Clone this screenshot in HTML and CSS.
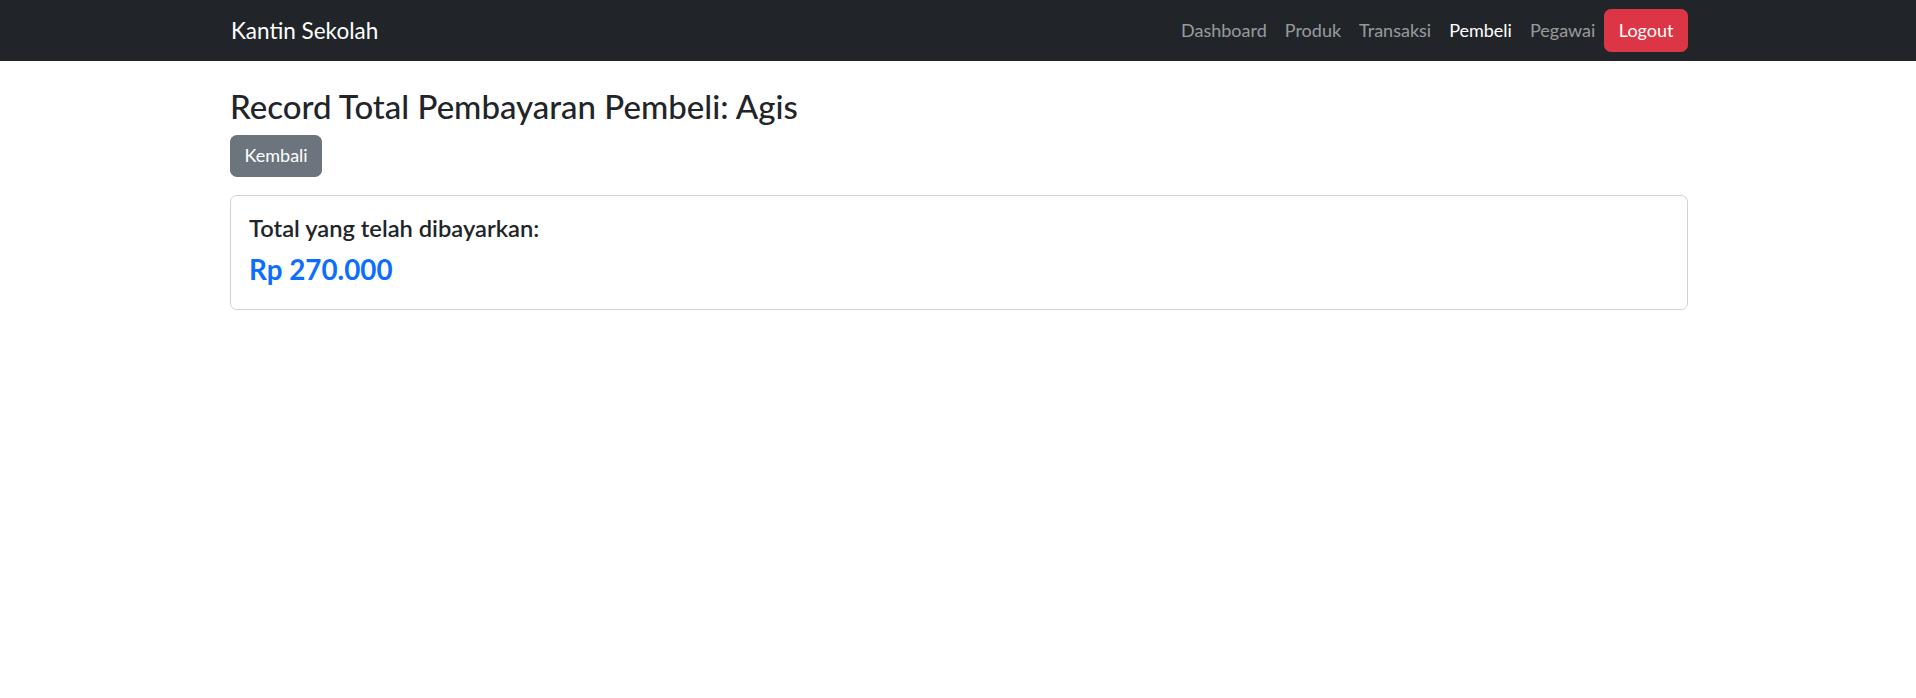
FILE: index.html
```html
<!DOCTYPE html>
<html lang="id">
<head>
<meta charset="utf-8">
<title>Kantin Sekolah</title>
<link rel="stylesheet" href="styles.css">
</head>
<body>
<nav class="navbar">
  <div class="nav-inner">
    <a class="brand" href="#">Kantin Sekolah</a>
    <ul class="nav-links">
      <li><a class="nav-link" href="#">Dashboard</a></li>
      <li><a class="nav-link" href="#">Produk</a></li>
      <li><a class="nav-link" href="#">Transaksi</a></li>
      <li><a class="nav-link active" href="#">Pembeli</a></li>
      <li><a class="nav-link" href="#">Pegawai</a></li>
      <li><a class="btn btn-danger" href="#">Logout</a></li>
    </ul>
  </div>
</nav>
<main class="container">
  <h2 class="title">Record Total Pembayaran Pembeli: Agis</h2>
  <a class="btn btn-secondary" href="#">Kembali</a>
  <div class="card">
    <div class="card-body">
      <h5 class="card-title">Total yang telah dibayarkan:</h5>
      <h4 class="amount">Rp 270.000</h4>
    </div>
  </div>
</main>
</body>
</html>
```

FILE: styles.css
```css
* { box-sizing: border-box; }
html, body { margin: 0; padding: 0; }
body {
  font-family: Lato, "Open Sans", "Liberation Sans", sans-serif;
  font-size: 18px;
  line-height: 1.5;
  color: #212529;
  background: #fff;
}
a { text-decoration: none; }

.navbar {
  background: #212529;
  height: 61px;
}
.nav-inner {
  max-width: 1460px;
  margin: 0 auto;
  padding-left: 2px;
  height: 100%;
  display: flex;
  align-items: center;
  justify-content: space-between;
}
.brand {
  color: #fff;
  font-size: 22.5px;
  line-height: 1.5;
  padding: 5px 0;
  margin-left: 1px;
}
.nav-links {
  list-style: none;
  margin: 0;
  padding: 0;
  display: flex;
  align-items: center;
}
.nav-link {
  display: block;
  padding: 9px 9px;
  color: rgba(255, 255, 255, 0.55);
}
.nav-link.active { color: #fff; }

.btn {
  display: inline-block;
  padding: 6.75px 13.5px;
  font-size: 18px;
  line-height: 27px;
  border: 1px solid transparent;
  border-radius: 6.75px;
  color: #fff;
}
.btn-danger { background: #dc3545; border-color: #dc3545; }
.btn-secondary { background: #6c757d; border-color: #6c757d; }

.container {
  max-width: 1460px;
  margin: 0 auto;
  padding: 26px 0 0 2px;
}
.title {
  margin: 0 0 8px;
  font-size: 33px;
  font-weight: 500;
  line-height: 1.2;
}
.card {
  margin-top: 18px;
  border: 1px solid rgba(0, 0, 0, 0.175);
  border-radius: 6.75px;
}
.card-body { padding: 18px; }
.card-title {
  margin: 0 0 10px;
  font-size: 23.7px;
  font-weight: 600;
  line-height: 1.2;
}
.amount {
  margin: 0 0 5px;
  font-size: 27.8px;
  font-weight: 700;
  line-height: 1.2;
  color: #0d6efd;
}
```
